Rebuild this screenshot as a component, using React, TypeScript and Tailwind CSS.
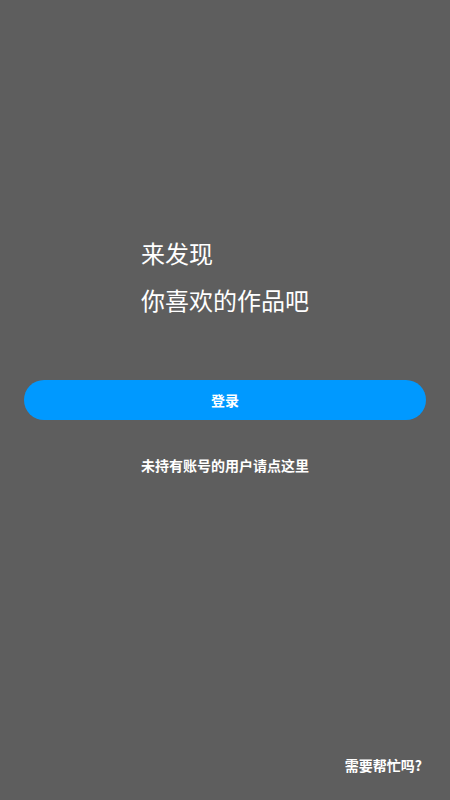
export default function App() {
  const font = { fontFamily: '"Noto Sans CJK SC", "Noto Sans", sans-serif' };
  return (
    <div className="w-[450px] h-[800px] bg-[#5e5e5e] flex flex-col text-white" style={font}>
      <div className="flex justify-center pt-[237px]">
        <div className="flex flex-col gap-[15px] text-[24px] leading-[32px]">
          <div>来发现</div>
          <div>你喜欢的作品吧</div>
        </div>
      </div>
      <div className="px-[24px] mt-[64px]">
        <button className="w-full h-[40px] rounded-full bg-[#0099ff] text-white text-[14px] font-bold flex items-center justify-center">
          登录
        </button>
      </div>
      <div className="mt-[35px] flex justify-center text-[14px] leading-[20px] font-bold">
        未持有账号的用户请点这里
      </div>
      <div className="flex-1" />
      <div className="flex justify-end pr-[28px] pb-[25px] text-[14px] leading-[20px] font-bold">
        需要帮忙吗?
      </div>
    </div>
  );
}
